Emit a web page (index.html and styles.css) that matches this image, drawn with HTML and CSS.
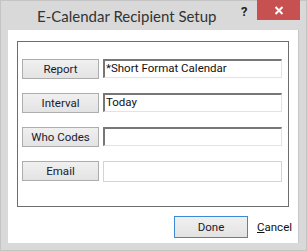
FILE: index.html
```html
<!DOCTYPE html>
<html>
<head>
    <title>E-Calendar Recipient Setup</title>
    <link rel="stylesheet" href="styles.css">
</head>
<body>
    <div class="window">
        <div class="titlebar">
            <span class="title">E-Calendar Recipient Setup</span>
            <span class="help">?</span>
            <span class="close">
                <svg width="10" height="9" viewBox="0 0 10 9">
                    <path d="M1.5 1 L8.5 8 M8.5 1 L1.5 8" stroke="#fff" stroke-width="2"/>
                </svg>
            </span>
        </div>
        <div class="client">
            <div class="group">
                <div class="row">
                    <button class="btn">Report</button>
                    <div class="field">*Short Format Calendar</div>
                </div>
                <div class="row">
                    <button class="btn">Interval</button>
                    <div class="field">Today</div>
                </div>
                <div class="row">
                    <button class="btn">Who Codes</button>
                    <div class="field"></div>
                </div>
                <div class="row">
                    <button class="btn">Email</button>
                    <div class="field disabled"></div>
                </div>
            </div>
            <div class="footer">
                <button class="btn done">Done</button>
                <span class="link"><u>C</u>ancel</span>
            </div>
        </div>
    </div>
</body>
</html>
```

FILE: styles.css
```css
* {
    box-sizing: border-box;
}
body {
    margin: 0;
    font-family: Roboto, "Noto Sans", sans-serif;
    background: #fff;
}
.window {
    width: 307px;
    height: 251px;
    background: #d9d9d9;
    border: 1px solid #c4c4c4;
    display: flex;
    flex-direction: column;
}
.titlebar {
    height: 29px;
    flex: none;
    position: relative;
}
.title {
    position: absolute;
    left: 36px;
    top: 6px;
    font-family: Lato, sans-serif;
    font-size: 15px;
    color: #333;
}
.help {
    position: absolute;
    left: 240px;
    top: 3px;
    font-weight: bold;
    font-size: 13px;
    color: #222;
}
.close {
    position: absolute;
    left: 256px;
    top: -1px;
    width: 43px;
    height: 20px;
    background: #c75050;
    display: flex;
    align-items: center;
    justify-content: center;
}
.client {
    margin: 0 7px 7px 7px;
    flex: 1;
    background: #fff;
    border-right: 1px solid #c8c8c8;
    display: flex;
    flex-direction: column;
}
.group {
    margin: 11px 9px 0 9px;
    height: 166px;
    border: 1px solid #6d6d6d;
    padding: 17px 6px 0 4px;
    display: flex;
    flex-direction: column;
    gap: 14px;
}
.row {
    display: flex;
    gap: 4px;
}
.btn {
    width: 77px;
    height: 20px;
    padding: 0 0 1px 0;
    display: flex;
    align-items: center;
    justify-content: center;
    font-family: Roboto, "Noto Sans", sans-serif;
    font-size: 11.5px;
    color: #1a1a2e;
    background: linear-gradient(#f0f0f0, #e3e3e3);
    border: 1px solid #adadad;
    border-radius: 0;
}
.field {
    flex: 1;
    height: 19px;
    border: 1px solid #e3e3e3;
    border-top: 2px solid #777;
    border-left: 2px solid #777;
    font-size: 11.5px;
    line-height: 15px;
    padding-left: 1px;
    color: #111;
}
.field.disabled {
    border: 1px solid #d4d4d4;
    height: 21px;
}
.footer {
    display: flex;
    align-items: center;
    margin: 9px 0 0 166px;
    gap: 9px;
}
.done {
    width: 74px;
    height: 22px;
    border-color: #3c8ad6;
}
.link {
    font-size: 11.5px;
    color: #111;
}
```
